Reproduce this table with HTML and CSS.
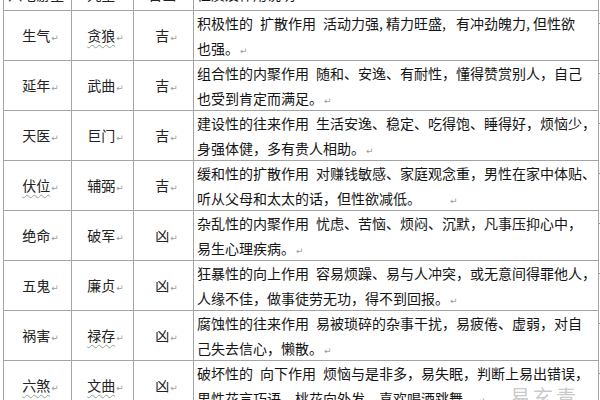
FILE: index.html
```html
<!DOCTYPE html>
<html lang="zh-CN">
<head>
<meta charset="utf-8">
<title>八宅游星</title>
<link rel="stylesheet" href="styles.css">
</head>
<body>
<div class="page">
  <table class="grid">
    <colgroup>
      <col class="c1"><col class="c2"><col class="c3"><col class="c4">
    </colgroup>
    <tr class="head">
      <td class="name">八宅游星<span class="rt">↵</span></td>
      <td class="name">九星<span class="rt">↵</span></td>
      <td class="name">吉凶<span class="rt">↵</span></td>
      <td class="desc">性质及作用说明<span class="rt">↵</span></td>
    </tr>
    <tr>
      <td class="name">生气<span class="rt">↵</span></td>
      <td class="name"><span class="sq">贪狼</span><span class="rt">↵</span></td>
      <td class="name">吉<span class="rt">↵</span></td>
      <td class="desc"><span class="ln">积极性的&ensp;扩散作用&ensp;活动力强, 精力旺盛,&ensp; 有冲劲魄力, 但性欲</span><span class="ln">也强。<span class="rt">↵</span></span></td>
    </tr>
    <tr>
      <td class="name">延年<span class="rt">↵</span></td>
      <td class="name">武曲<span class="rt">↵</span></td>
      <td class="name">吉<span class="rt">↵</span></td>
      <td class="desc"><span class="ln">组合性的内聚作用&ensp;随和、安逸、有耐性，懂得赞赏别人，自己</span><span class="ln">也受到肯定而满足。<span class="rt">↵</span></span></td>
    </tr>
    <tr>
      <td class="name">天医<span class="rt">↵</span></td>
      <td class="name">巨门<span class="rt">↵</span></td>
      <td class="name">吉<span class="rt">↵</span></td>
      <td class="desc"><span class="ln">建设性的往来作用&ensp;生活安逸、稳定、吃得饱、睡得好，烦恼少，</span><span class="ln">身强体健，多有贵人相助。<span class="rt">↵</span></span></td>
    </tr>
    <tr>
      <td class="name"><span class="sq">伏位</span><span class="rt">↵</span></td>
      <td class="name">辅弼<span class="rt">↵</span></td>
      <td class="name">吉<span class="rt">↵</span></td>
      <td class="desc"><span class="ln">缓和性的扩散作用&ensp;对赚钱敏感、家庭观念重，男性在家中体贴、</span><span class="ln">听从父母和太太的话，但性欲减低。&emsp;&emsp;<span class="rt">↵</span></span></td>
    </tr>
    <tr>
      <td class="name">绝命<span class="rt">↵</span></td>
      <td class="name">破军<span class="rt">↵</span></td>
      <td class="name">凶<span class="rt">↵</span></td>
      <td class="desc"><span class="ln">杂乱性的内聚作用&ensp;忧虑、苦恼、烦闷、沉默，凡事压抑心中，</span><span class="ln">易生心理疾病。<span class="rt">↵</span></span></td>
    </tr>
    <tr>
      <td class="name">五鬼<span class="rt">↵</span></td>
      <td class="name">廉贞<span class="rt">↵</span></td>
      <td class="name">凶<span class="rt">↵</span></td>
      <td class="desc"><span class="ln">狂暴性的向上作用&ensp;容易烦躁、易与人冲突，或无意间得罪他人，</span><span class="ln">人缘不佳，做事徒劳无功，得不到回报。<span class="rt">↵</span></span></td>
    </tr>
    <tr>
      <td class="name">祸害<span class="rt">↵</span></td>
      <td class="name"><span class="sq">禄存</span><span class="rt">↵</span></td>
      <td class="name">凶<span class="rt">↵</span></td>
      <td class="desc"><span class="ln">腐蚀性的往来作用&ensp;易被琐碎的杂事干扰，易疲倦、虚弱，对自</span><span class="ln">己失去信心，懒散。<span class="rt">↵</span></span></td>
    </tr>
    <tr>
      <td class="name"><span class="sq">六煞</span><span class="rt">↵</span></td>
      <td class="name"><span class="sq">文曲</span><span class="rt">↵</span></td>
      <td class="name">凶<span class="rt">↵</span></td>
      <td class="desc"><span class="ln">破坏性的&ensp;向下作用&ensp;烦恼与是非多，易失眠，判断上易出错误，</span><span class="ln">男性花言巧语，桃花向外发，喜欢喝酒跳舞。<span class="rt">↵</span></span></td>
    </tr>
  </table>
  <div class="mark">
    <svg class="logo" width="16" height="16" viewBox="0 0 16 16"><circle cx="8" cy="8" r="6.5" fill="none" stroke="currentColor" stroke-width="1.5"/><path d="M5 9.5c1-2 3-3 6-3" fill="none" stroke="currentColor" stroke-width="1.5"/></svg>
    <span>易玄青千</span>
  </div>
</div>
</body>
</html>
```

FILE: styles.css
```css
html, body {
  margin: 0;
  padding: 0;
  background: #ffffff;
}

.page {
  position: relative;
  width: 600px;
  height: 400px;
  overflow: hidden;
  padding-left: 3px;
  box-sizing: border-box;
  font-family: "Noto Sans CJK SC", "Noto Sans", sans-serif;
}

.grid {
  border-collapse: collapse;
  table-layout: fixed;
  width: 595px;
  margin-top: -40px;
}

.c1 { width: 68px; }
.c2 { width: 62px; }
.c3 { width: 60px; }
.c4 { width: 405px; }

.grid td {
  border: 1px solid #a4a4a4;
  padding: 0;
  height: 49px;
  font-size: 14px;
  line-height: 24.5px;
  overflow: hidden;
}

.name {
  text-align: center;
  vertical-align: middle;
  color: #222222;
}

.name .rt {
  margin-right: -6px;
}

.desc {
  vertical-align: top;
  color: #141414;
  padding-left: 3px !important;
  white-space: nowrap;
  position: relative;
  overflow: visible !important;
}

.desc::after {
  content: "";
  position: absolute;
  right: -4px;
  top: 12px;
  width: 3px;
  height: 1px;
  background: #9a9a9a;
}

.grid .head td {
  vertical-align: bottom;
  padding-bottom: 4px;
  height: 45px;
}

.ln {
  display: block;
  height: 24.5px;
}

.rt {
  font-family: "DejaVu Sans", sans-serif;
  font-size: 9px;
  line-height: 0;
  color: #9c9c9c;
  margin-left: 1px;
}

.sq {
  text-decoration: underline wavy #8fa38f;
  text-decoration-thickness: 1px;
  text-underline-offset: 3px;
}

.mark {
  position: absolute;
  left: 488px;
  top: 385px;
  display: flex;
  align-items: center;
  gap: 6px;
  font-size: 20px;
  line-height: 24px;
  letter-spacing: 3px;
  color: rgba(165, 165, 165, 0.6);
  font-family: "Noto Sans CJK SC", sans-serif;
}

.logo {
  flex: none;
}
```
